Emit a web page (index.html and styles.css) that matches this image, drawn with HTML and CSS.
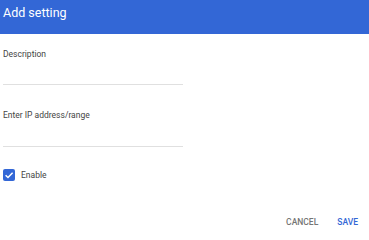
FILE: index.html
```html
<!DOCTYPE html>
<html>
<head>
<meta charset="utf-8">
<link rel="stylesheet" href="styles.css">
</head>
<body>
<div class="dialog">
  <div class="header">Add setting</div>
  <div class="content">
    <div class="field">
      <label class="label">Description</label>
      <div class="line"></div>
    </div>
    <div class="field field-ip">
      <label class="label">Enter IP address/range</label>
      <div class="line"></div>
    </div>
    <div class="check-row">
      <span class="checkbox">
        <svg width="12" height="12" viewBox="0 0 12 12"><path d="M2.6 6.2 L5 8.5 L9.6 3.8" fill="none" stroke="#fff" stroke-width="1.5"/></svg>
      </span>
      <span class="check-label">Enable</span>
    </div>
  </div>
  <div class="actions">
    <span class="btn cancel">CANCEL</span>
    <span class="btn save">SAVE</span>
  </div>
</div>
</body>
</html>
```
FILE: styles.css
```css
html, body {
  margin: 0;
  padding: 0;
  background: #fff;
}
body {
  font-family: Roboto, "Liberation Sans", sans-serif;
  width: 369px;
  height: 231px;
  overflow: hidden;
}
.header {
  height: 34px;
  background: #3367d6;
  color: #fff;
  font-size: 12.5px;
  line-height: 26px;
  padding-left: 3px;
  box-sizing: border-box;
}
.content {
  padding: 0 3px;
}
.field {
  width: 180px;
  padding-top: 15px;
}
.label {
  display: block;
  font-size: 8.5px;
  color: #444;
  line-height: 10px;
  height: 35px;
}
.field-ip {
  padding-top: 25px;
}
.field-ip .label {
  height: 36px;
}
.line {
  height: 1px;
  background: #e0e0e0;
}
.check-row {
  display: flex;
  align-items: center;
  margin-top: 22px;
  gap: 6px;
}
.checkbox {
  width: 12px;
  height: 12px;
  background: #3367d6;
  border-radius: 2px;
  display: flex;
}
.check-label {
  font-size: 8.5px;
  color: #444;
}
.actions {
  display: flex;
  justify-content: flex-end;
  gap: 19px;
  padding-right: 11px;
  margin-top: 36px;
  line-height: 10px;
}
.btn {
  font-size: 8.5px;
  font-weight: 500;
}
.cancel { color: #757575; }
.save { color: #3367d6; }
```
